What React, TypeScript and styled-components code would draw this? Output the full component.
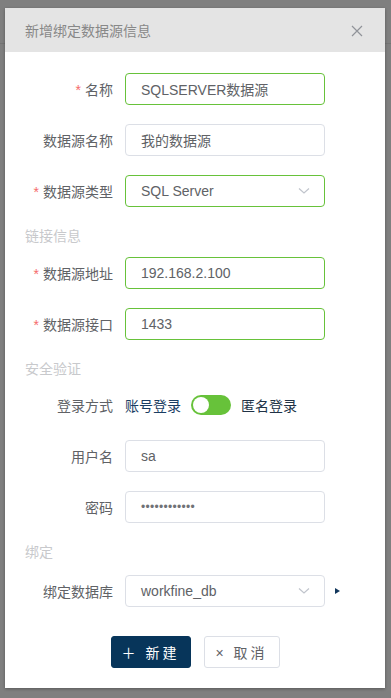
import * as React from 'react'
import styled, { createGlobalStyle } from 'styled-components'

const GlobalStyle = createGlobalStyle`
  html, body {
    margin: 0;
    padding: 0;
  }
  body {
    font-family: "Liberation Sans", "Noto Sans CJK SC", sans-serif;
    background: #7f7f7f;
  }
`

const Overlay = styled.div`
  width: 391px;
  height: 698px;
  box-sizing: border-box;
  padding: 8px 6px 0 5px;
  background: linear-gradient(#7f7f7f 0, #7f7f7f 43px, #747474 43px, #747474 44px, #7f7f7f 44px);
`

const Dialog = styled.div`
  width: 380px;
  background: #fff;
  box-shadow: 0 1px 3px rgba(0, 0, 0, 0.3);
`

const Header = styled.div`
  height: 44px;
  background: #e4e4e4;
  display: flex;
  align-items: center;
  justify-content: space-between;
  padding: 0 22px 0 20px;
`

const Title = styled.span`
  font-size: 14px;
  color: #888;
`

const CloseBtn = styled.span`
  display: flex;
  width: 12px;
  height: 12px;
  margin-top: 2px;
`

const Body = styled.div`
  padding: 21px 0 20px;
`

const Row = styled.div<{ $last?: boolean }>`
  display: flex;
  align-items: center;
  height: 32px;
  margin-bottom: ${(p) => (p.$last ? '0' : '19px')};
`

const Label = styled.label`
  width: 120px;
  box-sizing: border-box;
  padding-right: 12px;
  text-align: right;
  font-size: 14px;
  color: #606266;
`

const Star = styled.span`
  color: #f56c6c;
  margin-right: 4px;
`

const Field = styled.div<{ $ok?: boolean }>`
  width: 200px;
  height: 32px;
  box-sizing: border-box;
  border: 1px solid ${(p) => (p.$ok ? '#67c23a' : '#dcdfe6')};
  border-radius: 4px;
  display: flex;
  align-items: center;
  justify-content: space-between;
  padding: 0 14px 0 15px;
  font-size: 14px;
  color: #606266;
`

const Dots = styled.span`
  font-size: 12px;
  letter-spacing: 0.3px;
  color: #707276;
`

const Section = styled.div<{ $gap: number }>`
  height: 20px;
  line-height: 20px;
  padding-left: 20px;
  font-size: 14px;
  color: #c8c9cc;
  margin-bottom: ${(p) => p.$gap}px;
`

const SwitchWrap = styled.div`
  display: flex;
  align-items: center;
  gap: 10px;
  font-size: 14px;
`

const SwitchText = styled.span<{ $active?: boolean }>`
  color: ${(p) => (p.$active ? '#1a3d63' : '#203246')};
`

const Track = styled.span`
  position: relative;
  width: 40px;
  height: 20px;
  border-radius: 10px;
  background: #67c23a;
`

const Knob = styled.span`
  position: absolute;
  top: 2px;
  left: 2px;
  width: 16px;
  height: 16px;
  border-radius: 50%;
  background: #fff;
`

const Caret = styled.span`
  margin-left: 10px;
  width: 0;
  height: 0;
  border-top: 3.5px solid transparent;
  border-bottom: 3.5px solid transparent;
  border-left: 5px solid #12375c;
`

const Footer = styled.div`
  display: flex;
  justify-content: center;
  gap: 13px;
  margin-top: 29px;
`

const Button = styled.button<{ $primary?: boolean }>`
  height: 32px;
  box-sizing: border-box;
  border-radius: 3px;
  font-family: inherit;
  font-size: 14px;
  letter-spacing: 3px;
  padding: 0;
  display: flex;
  align-items: center;
  justify-content: center;
  width: ${(p) => (p.$primary ? '80px' : '76px')};
  border: 1px solid ${(p) => (p.$primary ? '#07355a' : '#dcdfe6')};
  background: ${(p) => (p.$primary ? '#07355a' : '#fff')};
  color: ${(p) => (p.$primary ? '#fff' : '#606266')};
`

const Chevron = () => (
  <svg width="12" height="8" viewBox="0 0 12 8">
    <path d="M1 1.5 L6 6 L11 1.5" fill="none" stroke="#c0c4cc" strokeWidth="1.2" />
  </svg>
)

interface FormRowProps {
  label: string
  required?: boolean
  children: React.ReactNode
}

const FormRow: React.FC<FormRowProps> = ({ label, required, children }) => (
  <Row>
    <Label>
      {required && <Star>*</Star>}
      {label}
    </Label>
    {children}
  </Row>
)

export default function App() {
  return (
    <>
      <GlobalStyle />
      <Overlay>
        <Dialog>
          <Header>
            <Title>新增绑定数据源信息</Title>
            <CloseBtn>
              <svg width="12" height="12" viewBox="0 0 12 12">
                <path d="M1 1 L11 11 M11 1 L1 11" stroke="#909399" strokeWidth="1.2" />
              </svg>
            </CloseBtn>
          </Header>
          <Body>
            <FormRow label="名称" required>
              <Field $ok>SQLSERVER数据源</Field>
            </FormRow>
            <FormRow label="数据源名称">
              <Field>我的数据源</Field>
            </FormRow>
            <FormRow label="数据源类型" required>
              <Field $ok>
                SQL Server
                <Chevron />
              </Field>
            </FormRow>

            <Section $gap={11}>链接信息</Section>
            <FormRow label="数据源地址" required>
              <Field $ok>192.168.2.100</Field>
            </FormRow>
            <FormRow label="数据源接口" required>
              <Field $ok>1433</Field>
            </FormRow>

            <Section $gap={10}>安全验证</Section>
            <FormRow label="登录方式">
              <SwitchWrap>
                <SwitchText $active>账号登录</SwitchText>
                <Track>
                  <Knob />
                </Track>
                <SwitchText>匿名登录</SwitchText>
              </SwitchWrap>
            </FormRow>
            <FormRow label="用户名">
              <Field>sa</Field>
            </FormRow>
            <FormRow label="密码">
              <Field>
                <Dots>••••••••••••</Dots>
              </Field>
            </FormRow>

            <Section $gap={13}>绑定</Section>
            <Row $last>
              <Label>绑定数据库</Label>
              <Field>
                workfine_db
                <Chevron />
              </Field>
              <Caret />
            </Row>

            <Footer>
              <Button $primary>＋ 新建</Button>
              <Button>× 取消</Button>
            </Footer>
          </Body>
        </Dialog>
      </Overlay>
    </>
  )
}
